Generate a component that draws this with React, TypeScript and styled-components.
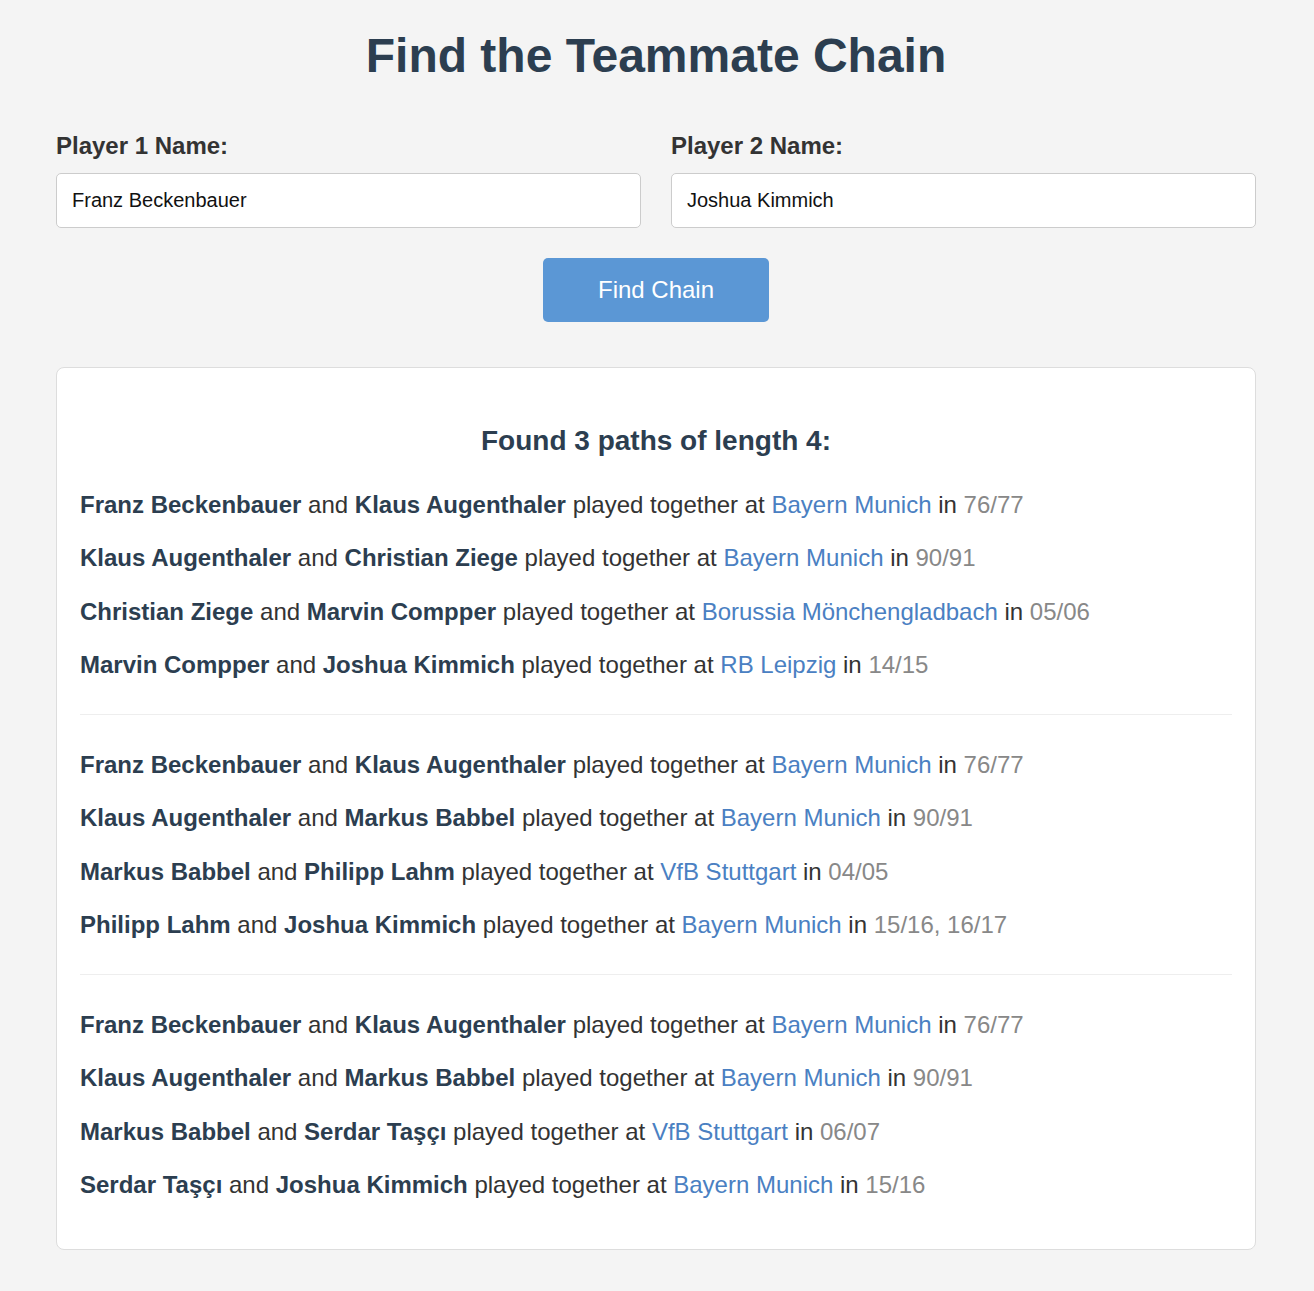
import React from 'react';
import styled, { createGlobalStyle } from 'styled-components';

const GlobalStyle = createGlobalStyle`
  body {
    margin: 0;
    background-color: #f4f4f4;
    font-family: "Liberation Sans", Arial, sans-serif;
    color: #333;
  }
`;

const Page = styled.main`
  max-width: 1200px;
  margin: 0 auto;
  padding: 28px 2px 42px 0;
`;

const Title = styled.h1`
  margin: 0 0 49px;
  text-align: center;
  font-size: 48px;
  font-weight: 700;
  color: #2c3e50;
`;

const Fields = styled.div`
  display: grid;
  grid-template-columns: 1fr 1fr;
  gap: 30px;
`;

const Field = styled.div`
  display: flex;
  flex-direction: column;
`;

const Label = styled.label`
  margin-bottom: 13px;
  font-size: 24px;
  font-weight: 700;
  color: #333;
`;

const Input = styled.input`
  box-sizing: border-box;
  height: 55px;
  padding: 0 15px;
  border: 1px solid #ccc;
  border-radius: 5px;
  background: #fff;
  font-family: inherit;
  font-size: 20px;
  color: #111;
`;

const Actions = styled.div`
  display: flex;
  justify-content: center;
  margin: 30px 0 45px;
`;

const Button = styled.button`
  height: 64px;
  padding: 0 55px;
  border: none;
  border-radius: 5px;
  background-color: #5b97d5;
  color: #fff;
  font-family: inherit;
  font-size: 24px;
`;

const Results = styled.section`
  padding: 24px 23px 48px;
  background: #fff;
  border: 1px solid #ddd;
  border-radius: 8px;
`;

const ResultsTitle = styled.h3`
  margin: 33px 0 31px;
  text-align: center;
  font-size: 28px;
  font-weight: 700;
  color: #2c3e50;
`;

const Path = styled.div`
  display: flex;
  flex-direction: column;
  gap: 20.33px;
`;

const Divider = styled.hr`
  margin: 33px 0;
  border: none;
  border-top: 1px solid #eee;
`;

const Step = styled.p`
  margin: 0;
  font-size: 24px;
  line-height: 33px;
  color: #333;
`;

const Name = styled.strong`
  color: #2c3e50;
`;

const Club = styled.span`
  color: #4a80c2;
`;

const Season = styled.span`
  color: #888;
`;

type Link = [string, string, string, string];

const paths: Link[][] = [
  [
    ['Franz Beckenbauer', 'Klaus Augenthaler', 'Bayern Munich', '76/77'],
    ['Klaus Augenthaler', 'Christian Ziege', 'Bayern Munich', '90/91'],
    ['Christian Ziege', 'Marvin Compper', 'Borussia Mönchengladbach', '05/06'],
    ['Marvin Compper', 'Joshua Kimmich', 'RB Leipzig', '14/15'],
  ],
  [
    ['Franz Beckenbauer', 'Klaus Augenthaler', 'Bayern Munich', '76/77'],
    ['Klaus Augenthaler', 'Markus Babbel', 'Bayern Munich', '90/91'],
    ['Markus Babbel', 'Philipp Lahm', 'VfB Stuttgart', '04/05'],
    ['Philipp Lahm', 'Joshua Kimmich', 'Bayern Munich', '15/16, 16/17'],
  ],
  [
    ['Franz Beckenbauer', 'Klaus Augenthaler', 'Bayern Munich', '76/77'],
    ['Klaus Augenthaler', 'Markus Babbel', 'Bayern Munich', '90/91'],
    ['Markus Babbel', 'Serdar Taşçı', 'VfB Stuttgart', '06/07'],
    ['Serdar Taşçı', 'Joshua Kimmich', 'Bayern Munich', '15/16'],
  ],
];

export default function App() {
  return (
    <>
      <GlobalStyle />
      <Page>
        <Title>Find the Teammate Chain</Title>
        <Fields>
          <Field>
            <Label>Player 1 Name:</Label>
            <Input defaultValue="Franz Beckenbauer" />
          </Field>
          <Field>
            <Label>Player 2 Name:</Label>
            <Input defaultValue="Joshua Kimmich" />
          </Field>
        </Fields>
        <Actions>
          <Button>Find Chain</Button>
        </Actions>
        <Results>
          <ResultsTitle>Found {paths.length} paths of length 4:</ResultsTitle>
          {paths.map((path, i) => (
            <React.Fragment key={i}>
              {i > 0 && <Divider />}
              <Path>
                {path.map(([a, b, club, season], j) => (
                  <Step key={j}>
                    <Name>{a}</Name> and <Name>{b}</Name> played together at{' '}
                    <Club>{club}</Club> in <Season>{season}</Season>
                  </Step>
                ))}
              </Path>
            </React.Fragment>
          ))}
        </Results>
      </Page>
    </>
  );
}
